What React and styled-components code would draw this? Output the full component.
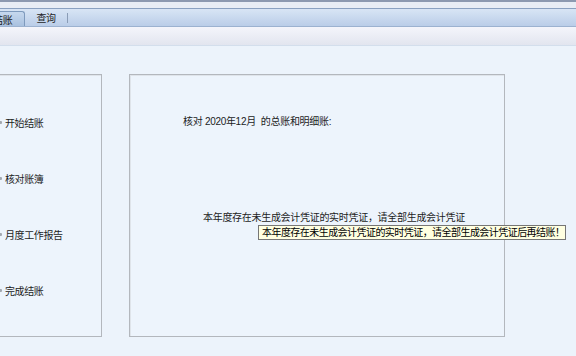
import styled, { createGlobalStyle } from "styled-components"

const GlobalStyle = createGlobalStyle`
  html, body {
    margin: 0;
    padding: 0;
    height: 100%;
    background: #ecf3fb;
    overflow: hidden;
  }
  body {
    font-family: "Liberation Sans", "Noto Sans CJK SC", sans-serif;
    font-size: 10px;
    color: #1c1c1c;
  }
`

const Page = styled.div`
  width: 576px;
  height: 356px;
  position: relative;
  overflow: hidden;
  background: #ecf3fb;
`

const TopEdge = styled.div`
  height: 2px;
  background: #8c99b0;
`

const TopStrip = styled.div`
  height: 6px;
  background: #e8edf5;
`

const TabBar = styled.div`
  height: 17px;
  border-top: 1px solid #8aa1c1;
  border-bottom: 1px solid #9cb2d0;
  background: linear-gradient(to bottom, #d8e5f5, #bacde8);
  display: flex;
  align-items: flex-end;
  margin-left: -20px;
`

const Tab = styled.div`
  height: ${(p) => (p.active ? "15px" : "17px")};
  padding: 0 ${(p) => (p.active ? "12px" : "11px")};
  display: flex;
  align-items: center;
  letter-spacing: -0.3px;
  color: #1e1e1e;
  box-sizing: border-box;
  ${(p) =>
    p.active &&
    `
    border: 1px solid #7e9abd;
    border-bottom: none;
    border-top-right-radius: 3px;
    background: linear-gradient(to bottom, #c6d8ee, #a9c1df);
  `}
`

const TabSep = styled.div`
  width: 1px;
  height: 10px;
  margin-bottom: 3px;
  background: #8a9cb6;
`

const Toolbar = styled.div`
  height: 18px;
  border-bottom: 1px solid #d3deec;
  background: linear-gradient(to bottom, #f4f5fb, #e2e5ef);
`

const Body = styled.div`
  display: flex;
  gap: 27px;
  padding-top: 28px;
  margin-left: -12px;
`

const Panel = styled.div`
  box-sizing: border-box;
  height: 263px;
  width: ${(p) => p.w}px;
  border: 1px solid #b3b7bd;
  box-shadow: inset 1px 1px 0 #dfe4ea;
  background: #edf4fc;
`

const StepList = styled.div`
  display: flex;
  flex-direction: column;
  gap: 40px;
  padding: 39px 0 0 10px;
`

const Step = styled.div`
  display: flex;
  align-items: center;
  gap: 3px;
  height: 16px;
  letter-spacing: -0.4px;
`

const Bullet = styled.span`
  width: 3px;
  height: 3px;
  border-radius: 1px;
  background: #a3a9b1;
`

const Content = styled.div`
  padding: 39px 0 0 53px;
`

const Line = styled.div`
  height: 16px;
  line-height: 16px;
  white-space: pre;
  letter-spacing: -0.3px;
  margin-left: ${(p) => p.indent || 0}px;
  margin-top: ${(p) => p.top || 0}px;
`

const Tooltip = styled.div`
  position: absolute;
  left: 258px;
  top: 225px;
  width: 308px;
  height: 15px;
  box-sizing: border-box;
  border: 1px solid #767676;
  background: #ffffe1;
  color: #000;
  padding-left: 3px;
  line-height: 13px;
  letter-spacing: -0.55px;
  white-space: nowrap;
  overflow: hidden;
`

const steps = ["开始结账", "核对账簿", "月度工作报告", "完成结账"]

export default function App() {
  return (
    <Page>
      <GlobalStyle />
      <TopEdge />
      <TopStrip />
      <TabBar>
        <Tab active>结账</Tab>
        <Tab>查询</Tab>
        <TabSep />
      </TabBar>
      <Toolbar />
      <Body>
        <Panel w={114}>
          <StepList>
            {steps.map((s) => (
              <Step key={s}>
                <Bullet />
                {s}
              </Step>
            ))}
          </StepList>
        </Panel>
        <Panel w={376}>
          <Content>
            <Line>{"核对 2020年12月  的总账和明细账:"}</Line>
            <Line indent={20} top={80}>
              本年度存在未生成会计凭证的实时凭证，请全部生成会计凭证
            </Line>
          </Content>
        </Panel>
      </Body>
      <Tooltip>本年度存在未生成会计凭证的实时凭证，请全部生成会计凭证后再结账！</Tooltip>
    </Page>
  )
}
